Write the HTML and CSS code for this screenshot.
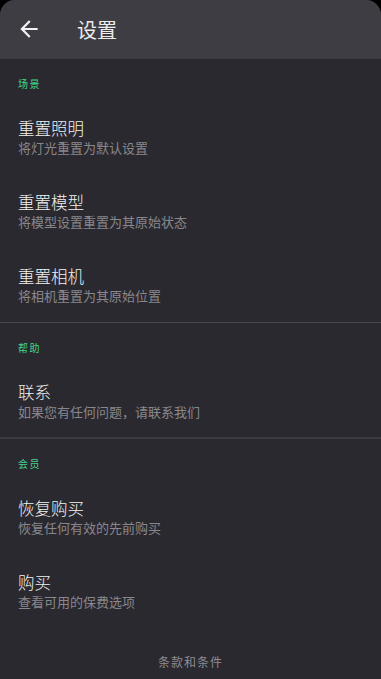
FILE: index.html
```html
<!DOCTYPE html>
<html lang="zh">
<head>
<meta charset="utf-8">
<link rel="stylesheet" href="styles.css">
</head>
<body>
<div class="screen">
  <header class="appbar">
    <svg class="back" viewBox="0 0 24 24" width="26" height="26"><path d="M20 11H7.83l5.59-5.59L12 4l-8 8 8 8 1.41-1.41L7.83 13H20v-2z" fill="#f2f2f2"/></svg>
    <h1 class="title">设置</h1>
  </header>

  <section class="section">
    <div class="label">场景</div>
    <div class="item"><div class="item-title">重置照明</div><div class="item-sub">将灯光重置为默认设置</div></div>
    <div class="item"><div class="item-title">重置模型</div><div class="item-sub">将模型设置重置为其原始状态</div></div>
    <div class="item"><div class="item-title">重置相机</div><div class="item-sub">将相机重置为其原始位置</div></div>
  </section>
  <div class="divider"></div>

  <section class="section">
    <div class="label">帮助</div>
    <div class="item"><div class="item-title">联系</div><div class="item-sub">如果您有任何问题，请联系我们</div></div>
  </section>
  <div class="divider thick"></div>

  <section class="section">
    <div class="label">会员</div>
    <div class="item"><div class="item-title">恢复购买</div><div class="item-sub">恢复任何有效的先前购买</div></div>
    <div class="item"><div class="item-title">购买</div><div class="item-sub">查看可用的保费选项</div></div>
  </section>

  <footer class="footer">条款和条件</footer>
</div>
</body>
</html>
```
FILE: styles.css
```css
html, body {
  margin: 0;
  padding: 0;
  background: #000;
}
body {
  font-family: "Noto Sans CJK SC", "Noto Sans", sans-serif;
}
.screen {
  width: 381px;
  height: 679px;
  background: #2a292f;
  border-radius: 15px 15px 0 0;
  overflow: hidden;
  display: flex;
  flex-direction: column;
}
.appbar {
  height: 59px;
  background: #3e3d43;
  display: flex;
  align-items: center;
  flex-shrink: 0;
}
.back {
  margin-left: 16px;
  margin-top: -1px;
}
.title {
  margin: 0 0 0 35px;
  font-size: 20px;
  font-weight: 400;
  color: #ececec;
  line-height: 24px;
}
.section {
  padding-top: 16px;
}
.label {
  padding-left: 18px;
  font-size: 10px;
  line-height: 18px;
  letter-spacing: 1.5px;
  color: #43d68b;
  margin-bottom: 7px;
}
.item {
  padding: 17px 18px;
}
.item-title {
  font-size: 16.5px;
  font-weight: 300;
  line-height: 22px;
  color: #f2f2f2;
}
.item-sub {
  font-size: 13px;
  line-height: 18px;
  color: #88878d;
}
.divider {
  height: 1px;
  background: #48474d;
}
.divider.thick {
  height: 2px;
  background: #3b3a40;
  margin-top: -1px;
}
.footer {
  margin-top: auto;
  text-align: center;
  font-size: 12px;
  line-height: 18px;
  letter-spacing: 1px;
  color: #8e8d93;
  padding-bottom: 8px;
}
```
